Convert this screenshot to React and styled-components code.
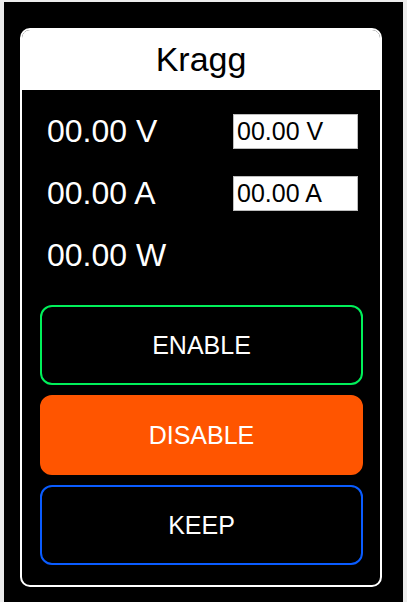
import React from 'react'
import styled, { createGlobalStyle } from 'styled-components'

const GlobalStyle = createGlobalStyle`
  html, body {
    margin: 0;
    padding: 0;
    background: #ececec;
    font-family: "Liberation Sans", Arial, sans-serif;
  }
`

const readings = [
  { value: '00.00 V', setpoint: '00.00 V' },
  { value: '00.00 A', setpoint: '00.00 A' },
  { value: '00.00 W' },
]

const buttons = [
  { label: 'ENABLE', variant: 'outline', color: '#00f05a' },
  { label: 'DISABLE', variant: 'filled', color: '#ff5500' },
  { label: 'KEEP', variant: 'outline', color: '#0a5cff' },
]

function App() {
  return (
    <>
      <GlobalStyle />
      <Screen>
        <Card>
          <Header>Kragg</Header>
          <Readings>
            {readings.map((each, index) => (
              <Row key={index}>
                <Value>{each.value}</Value>
                {each.setpoint && <Setpoint>{each.setpoint}</Setpoint>}
              </Row>
            ))}
          </Readings>
          <Actions>
            {buttons.map((each) => (
              <ActionButton key={each.label} $variant={each.variant} $color={each.color}>
                {each.label}
              </ActionButton>
            ))}
          </Actions>
        </Card>
      </Screen>
    </>
  )
}

const Screen = styled.div`
  margin: 2px 0 0 4px;
  width: 399px;
  height: 600px;
  background: #000;
  padding: 26px 0 0 16px;
  box-sizing: border-box;
  overflow: hidden;
`

const Card = styled.div`
  width: 362px;
  height: 559px;
  box-sizing: border-box;
  border: 2px solid #fff;
  border-radius: 10px;
  overflow: hidden;
  display: flex;
  flex-direction: column;
`

const Header = styled.div`
  height: 60px;
  background: #fff;
  color: #000;
  font-size: 34px;
  display: flex;
  align-items: center;
  justify-content: center;
  padding-bottom: 2px;
  box-sizing: border-box;
`

const Readings = styled.div`
  padding: 10px 22px 0 25px;
  display: grid;
  grid-auto-rows: 62px;
`

const Row = styled.div`
  display: flex;
  align-items: center;
  justify-content: space-between;
`

const Value = styled.span`
  color: #fff;
  font-size: 32px;
`

const Setpoint = styled.span`
  width: 125px;
  height: 35px;
  box-sizing: border-box;
  background: #fff;
  border: 1px solid #bdbdbd;
  color: #000;
  font-size: 25px;
  padding-left: 3px;
  display: flex;
  align-items: center;
`

const Actions = styled.div`
  margin-top: 19px;
  padding: 0 17px 0 18px;
  display: flex;
  flex-direction: column;
  gap: 10px;
`

const ActionButton = styled.button`
  height: 80px;
  box-sizing: border-box;
  border-radius: 12px;
  border: 2px solid ${(p) => p.$color};
  background: ${(p) => (p.$variant === 'filled' ? p.$color : '#000')};
  color: #fff;
  font-family: "Liberation Sans", Arial, sans-serif;
  font-size: 25px;
  cursor: pointer;
`

export default App
